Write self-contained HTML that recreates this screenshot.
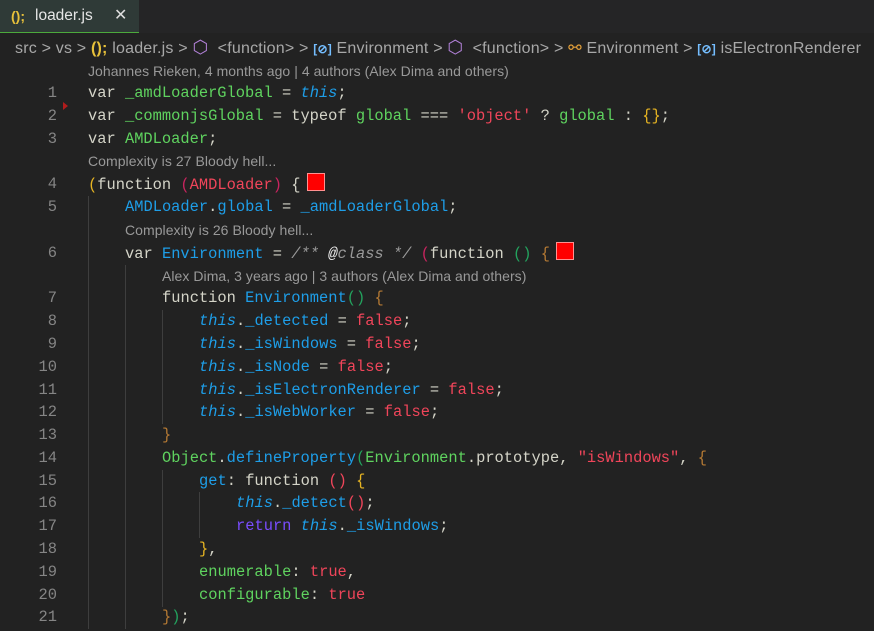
<!DOCTYPE html>
<html><head><meta charset="utf-8"><style>
body{margin:0;width:874px;height:631px;background:#222222;overflow:hidden;font-family:"Liberation Sans",sans-serif;position:relative}
.tabbar{position:absolute;left:0;top:0;width:874px;height:33px;background:#252526}
.tab{position:absolute;left:0;top:0;width:139px;height:32px;background:#2f3a37;border-bottom:1px solid #4caa3c;color:#e6e6e6;font-size:15.5px;line-height:32px}
.tab .ic{position:absolute;left:11px;color:#e8c13a;font-weight:bold;font-size:14px}
.tab .nm{position:absolute;left:35px}
.tab .x{position:absolute;left:114px;font-size:16px;color:#ddd}
.bc{position:absolute;left:15px;top:34px;height:26px;line-height:26px;font-size:16px;color:#a8a8a8;white-space:nowrap;letter-spacing:0.2px}
.bc .y{color:#e8c13a;font-weight:bold}
.bc .p{color:#b180d7;font-size:18px}
.bc .b{color:#75beff;font-size:12px;font-weight:bold}
.bc .o{color:#e5a13a}
.row{position:absolute;left:0;height:23px;width:874px;white-space:pre}
.ln{position:absolute;right:817px;top:0;line-height:23px;font-family:"Liberation Mono",monospace;font-size:15.4px;color:#858585}
.cd{position:absolute;left:88px;top:0;line-height:23px;font-family:"Liberation Mono",monospace;font-size:15.4px;color:#d4d4c8}
.lens{position:absolute;left:88px;top:0;line-height:23px;font-size:14px;color:#999;letter-spacing:0.05px}
.g{display:inline-block;width:37px;height:23px;vertical-align:top;box-shadow:inset 1px 0 0 #3e3e3e}
.k{color:#d4d4c8}.gr{color:#5fd35f}.bl{color:#1e9ee8}.it{font-style:italic;color:#1e9ee8}
.r{color:#f0455a}.pu{color:#7a4dff}.cm{color:#9a9a9a;font-style:italic}
.b1{color:#e6b422}.b2{color:#c7245e}.b3{color:#23a35e}.b4{color:#b57a34}
.sq{display:inline-block;width:16px;height:16px;background:#ff0000;border:1px solid #ff9090;vertical-align:-2px;margin-left:6px}
</style></head><body>
<div class="tabbar"><div class="tab"><span class="ic">();</span><span class="nm">loader.js</span><span class="x">✕</span></div></div>
<div class="bc">src &gt; vs &gt; <span class="y">();</span> loader.js &gt; <span class="p">⬡</span>&nbsp; &lt;function&gt; &gt; <span class="b">[⊘]</span> Environment &gt; <span class="p">⬡</span>&nbsp; &lt;function&gt; &gt; <span class="o">⚯</span> Environment &gt; <span class="b">[⊘]</span> isElectronRenderer</div>

<div class="row" style="top:60px"><div class="lens">Johannes Rieken, 4 months ago | 4 authors (Alex Dima and others)</div></div>
<div class="row" style="top:82px"><div class="ln">1</div><div class="cd">var <span class="gr">_amdLoaderGlobal</span> = <span class="it">this</span>;</div></div>
<div class="row" style="top:105px"><div class="ln">2</div><div style="position:absolute;left:63px;top:-3px;width:0;height:0;border-top:4px solid transparent;border-bottom:4px solid transparent;border-left:5px solid #b01c1c"></div><div class="cd">var <span class="gr">_commonjsGlobal</span> = typeof <span class="gr">global</span> === <span class="r">'object'</span> ? <span class="gr">global</span> : <span class="b1">{}</span>;</div></div>
<div class="row" style="top:128px"><div class="ln">3</div><div class="cd">var <span class="gr">AMDLoader</span>;</div></div>
<div class="row" style="top:150px"><div class="lens">Complexity is 27 Bloody hell...</div></div>
<div class="row" style="top:173px"><div class="ln">4</div><div class="cd"><span class="b1">(</span>function <span class="b2">(</span><span class="r">AMDLoader</span><span class="b2">)</span> <span class="k">{</span><span class="sq"></span></div></div>
<div class="row" style="top:196px"><div class="ln">5</div><div class="cd"><span class="g"></span><span class="bl">AMDLoader</span>.<span class="bl">global</span> = <span class="bl">_amdLoaderGlobal</span>;</div></div>
<div class="row" style="top:219px"><div class="lens" style="left:125px">Complexity is 26 Bloody hell...</div><div class="cd"><span class="g"></span></div></div>
<div class="row" style="top:242px"><div class="ln">6</div><div class="cd"><span class="g"></span>var <span class="bl">Environment</span> = <span class="cm">/** <span style="color:#eee">@</span>class */</span> <span class="b2">(</span>function <span class="b3">()</span> <span class="b4">{</span><span class="sq"></span></div></div>
<div class="row" style="top:265px"><div class="lens" style="left:162px">Alex Dima, 3 years ago | 3 authors (Alex Dima and others)</div><div class="cd"><span class="g"></span><span class="g"></span></div></div>
<div class="row" style="top:287px"><div class="ln">7</div><div class="cd"><span class="g"></span><span class="g"></span>function <span class="bl">Environment</span><span class="b3">()</span> <span class="b4">{</span></div></div>
<div class="row" style="top:310px"><div class="ln">8</div><div class="cd"><span class="g"></span><span class="g"></span><span class="g"></span><span class="it">this</span>.<span class="bl">_detected</span> = <span class="r">false</span>;</div></div>
<div class="row" style="top:333px"><div class="ln">9</div><div class="cd"><span class="g"></span><span class="g"></span><span class="g"></span><span class="it">this</span>.<span class="bl">_isWindows</span> = <span class="r">false</span>;</div></div>
<div class="row" style="top:356px"><div class="ln">10</div><div class="cd"><span class="g"></span><span class="g"></span><span class="g"></span><span class="it">this</span>.<span class="bl">_isNode</span> = <span class="r">false</span>;</div></div>
<div class="row" style="top:379px"><div class="ln">11</div><div class="cd"><span class="g"></span><span class="g"></span><span class="g"></span><span class="it">this</span>.<span class="bl">_isElectronRenderer</span> = <span class="r">false</span>;</div></div>
<div class="row" style="top:401px"><div class="ln">12</div><div class="cd"><span class="g"></span><span class="g"></span><span class="g"></span><span class="it">this</span>.<span class="bl">_isWebWorker</span> = <span class="r">false</span>;</div></div>
<div class="row" style="top:424px"><div class="ln">13</div><div class="cd"><span class="g"></span><span class="g"></span><span class="b4">}</span></div></div>
<div class="row" style="top:447px"><div class="ln">14</div><div class="cd"><span class="g"></span><span class="g"></span><span class="gr">Object</span>.<span class="bl">defineProperty</span><span class="b3">(</span><span class="gr">Environment</span>.prototype, <span class="r">"isWindows"</span>, <span class="b4">{</span></div></div>
<div class="row" style="top:470px"><div class="ln">15</div><div class="cd"><span class="g"></span><span class="g"></span><span class="g"></span><span class="bl">get</span>: function <span class="r">()</span> <span class="b1">{</span></div></div>
<div class="row" style="top:492px"><div class="ln">16</div><div class="cd"><span class="g"></span><span class="g"></span><span class="g"></span><span class="g"></span><span class="it">this</span>.<span class="bl">_detect</span><span class="r">()</span>;</div></div>
<div class="row" style="top:515px"><div class="ln">17</div><div class="cd"><span class="g"></span><span class="g"></span><span class="g"></span><span class="g"></span><span class="pu">return</span> <span class="it">this</span>.<span class="bl">_isWindows</span>;</div></div>
<div class="row" style="top:538px"><div class="ln">18</div><div class="cd"><span class="g"></span><span class="g"></span><span class="g"></span><span class="b1">}</span>,</div></div>
<div class="row" style="top:561px"><div class="ln">19</div><div class="cd"><span class="g"></span><span class="g"></span><span class="g"></span><span class="gr">enumerable</span>: <span class="r">true</span>,</div></div>
<div class="row" style="top:584px"><div class="ln">20</div><div class="cd"><span class="g"></span><span class="g"></span><span class="g"></span><span class="gr">configurable</span>: <span class="r">true</span></div></div>
<div class="row" style="top:606px"><div class="ln">21</div><div class="cd"><span class="g"></span><span class="g"></span><span class="b4">}</span><span class="b3">)</span>;</div></div>
</body></html>
